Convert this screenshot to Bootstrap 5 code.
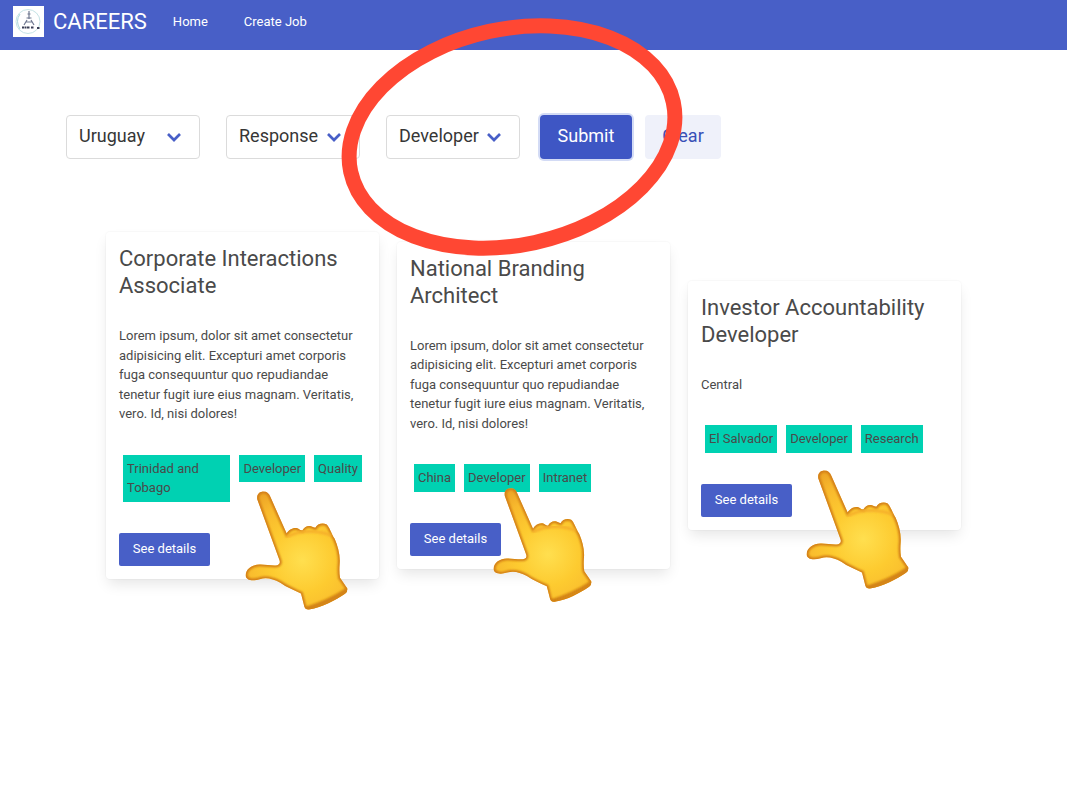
<!DOCTYPE html>
<html lang="en">
<head>
<meta charset="utf-8">
<meta name="viewport" content="width=device-width, initial-scale=1">
<title>Careers</title>
<link href="https://cdn.jsdelivr.net/npm/bootstrap@5.3.0/dist/css/bootstrap.min.css" rel="stylesheet">
<style>
  body { font-family: Roboto, "Liberation Sans", sans-serif; font-size: 13px; line-height: 1.5; color: #4a4a4a; background: #fff; padding-right: 11px; }
  .topbar { background: #485fc7; padding: 6px 13px 13px; }
  .topbar .navbar-brand { font-size: 22px; line-height: 28px; color: #fff; gap: 9px; margin-right: 26px; }
  .topbar .navbar-nav .nav-link { color: #fff; line-height: 30px; padding: 0; }
  .topbar .navbar-nav { gap: 36px; }

  .filters { padding: 65px 65px 0 66px; }
  .filters .form-select {
    width: 134px; height: 44px; padding: 0 30px 4px 12px; font-size: 18px; color: #363636; border-color: #dbdbdb; border-radius: 4px;
    background: #fff url("data:image/svg+xml,%3Csvg xmlns='http://www.w3.org/2000/svg' viewBox='0 0 16 11'%3E%3Cpath d='M2 2l6 6L14 2' fill='none' stroke='%23485fc7' stroke-width='2.700'/%3E%3C/svg%3E") no-repeat right 17px top 16px / 16px 11px;
  }
  .filter-fields { gap: 26px; margin-right: 20px; }
  .filters .btn { height: 44px; font-size: 18px; line-height: 27px; padding: 0 0 3px; border: 0; border-radius: 4px; }
  .btn-submit, .btn-submit:hover { width: 92px; margin-right: 13px; color: #fff; background: #3e56c4; box-shadow: 0 0 0 2px #d3dbf5; }
  .btn-clear, .btn-clear:hover { width: 76px; color: #3850b7; background: #eff1fa; }
  .highlight-ring { left: 342px; top: 17px; width: 340px; height: 240px; z-index: 3; pointer-events: none; overflow: visible; }

  .jobs { display: grid; grid-template-columns: repeat(3, minmax(0, 1fr)); gap: 18px; align-items: center; padding: 73px 106px; }
  .job { border: 0; border-radius: 4px; color: #4a4a4a; padding: 13px; box-shadow: 0 7px 14px -2px rgba(10,10,10,.1), 0 0 0 1px rgba(10,10,10,.02); }
  .job h2 { font-size: 22px; line-height: 27px; font-weight: 400; margin: 0 0 27px; }
  .tags { gap: 9px; padding: 0 4px; margin: 31px 0; }
  .tag-item { background: #00d1b2; padding: 4px; }
  .btn-details, .btn-details:hover { width: 91px; height: 33px; padding: 0 0 1px; font-size: 13px; line-height: 32px; border: 0; border-radius: 2px; color: #fff; background: #485fc7; }
  .hand { z-index: 2; width: 104px; height: 121px; pointer-events: none; }
  .hand-a { right: 31px; bottom: -32px; }
  .hand-b { right: 78px; bottom: -34px; width: 100px; height: 116px; }
  .hand-c { right: 52px; bottom: -60px; }
</style>
</head>
<body>
<svg width="0" height="0" class="position-absolute" aria-hidden="true">
  <defs>
    <radialGradient id="skin" gradientUnits="userSpaceOnUse" cx="205" cy="240" r="230">
      <stop offset="0" stop-color="#ffdf4f"/><stop offset=".42" stop-color="#fdcb30"/><stop offset=".78" stop-color="#f8b92d"/><stop offset="1" stop-color="#eda526"/>
    </radialGradient>
    <filter id="soft" x="-10%" y="-10%" width="120%" height="120%"><feGaussianBlur stdDeviation="3"/></filter>
    <path id="handShape" d="M70 58C67 42 77 34 89 34C99 34 105 40 109 50L158 160C165 148 179 140 192 145Q199 151 205 151C210 140 221 135 231 138Q239 142 244 143C249 131 265 127 277 132C286 139 291 158 302 176C312 199 319 225 317 250Q315 276 318 293L340 325Q341 336 333 341C303 361 266 382 225 388Q214 389 211 379L201 340C180 330 158 322 139 308C117 296 98 291 77 297C55 304 35 300 35 285C36 265 55 254 76 253C93 252 117 258 130 255Q141 252 136 239Z"/>
    <clipPath id="handClip"><use href="#handShape"/></clipPath>
    <symbol id="hand" viewBox="30 30 312 362">
      <use href="#handShape" fill="url(#skin)"/>
      <g clip-path="url(#handClip)" fill="none">
        <use href="#handShape" stroke="#d07a14" stroke-width="11" filter="url(#soft)"/>
        <path d="M158 170Q195 151 235 154T291 166" stroke="#f5ad2b" stroke-width="8" filter="url(#soft)"/>
        <path d="M211 388Q285 365 341 328" stroke="#d28212" stroke-width="12" filter="url(#soft)"/>
      </g>
    </symbol>
  </defs>
</svg>

<nav class="navbar navbar-expand topbar" aria-label="Main">
  <a class="navbar-brand d-flex align-items-center p-0" href="#">
    <svg width="31" height="31" viewBox="0 0 31 31" aria-hidden="true">
      <path fill="#fff" d="M0 0h31v31H0z"/>
      <circle cx="15" cy="15.500" r="12" fill="none" stroke="#c5e3e5" stroke-width="1"/>
      <path d="M7 8Q2 15 7 23" fill="none" stroke="#a9d4da"/>
      <path d="M16 5v5M14.500 8h3M13.500 12h5M16 10v3M14 14l-3 5M18 14l3 5M13 16h6" stroke="#6f7890" stroke-width="1.200" fill="none"/>
      <path d="M9 21.500h8M18 21.500h3M24 22h3" stroke="#3a3e55" stroke-width="2" stroke-dasharray="2 .5"/>
    </svg>
    <span>CAREERS</span>
  </a>
  <div class="navbar-nav">
    <a class="nav-link" href="#">Home</a>
    <a class="nav-link" href="#">Create Job</a>
  </div>
</nav>

<main>
  <form class="filters d-flex" onsubmit="return false">
    <div class="filter-fields d-flex">
      <select class="form-select" aria-label="Country"><option>Uruguay</option></select>
      <select class="form-select" aria-label="Area"><option>Response</option></select>
      <select class="form-select" aria-label="Role"><option>Developer</option></select>
    </div>
    <button class="btn btn-submit" type="submit">Submit</button>
    <button class="btn btn-clear" type="reset">Clear</button>
  </form>
  <svg class="highlight-ring position-absolute" viewBox="342 16 340 240" aria-hidden="true">
    <ellipse cx="512" cy="136" rx="165" ry="108" transform="rotate(-12.2 512 136)" fill="none" stroke="#ff4733" stroke-width="15"/>
  </svg>

  <section class="jobs" aria-label="Jobs">
    <article class="card job">
      <h2>Corporate Interactions Associate</h2>
      <p class="mb-0">Lorem ipsum, dolor sit amet consectetur adipisicing elit. Excepturi amet corporis fuga consequuntur quo repudiandae tenetur fugit iure eius magnam. Veritatis, vero. Id, nisi dolores!</p>
      <div class="tags d-flex align-items-start">
        <span class="tag-item">Trinidad and Tobago</span><span class="tag-item">Developer</span><span class="tag-item">Quality</span>
      </div>
      <button class="btn btn-details" type="button">See details</button>
      <svg class="hand hand-a position-absolute" aria-hidden="true"><use href="#hand"/></svg>
    </article>
    <article class="card job">
      <h2>National Branding Architect</h2>
      <p class="mb-0">Lorem ipsum, dolor sit amet consectetur adipisicing elit. Excepturi amet corporis fuga consequuntur quo repudiandae tenetur fugit iure eius magnam. Veritatis, vero. Id, nisi dolores!</p>
      <div class="tags d-flex align-items-start">
        <span class="tag-item">China</span><span class="tag-item">Developer</span><span class="tag-item">Intranet</span>
      </div>
      <button class="btn btn-details" type="button">See details</button>
      <svg class="hand hand-b position-absolute" aria-hidden="true"><use href="#hand"/></svg>
    </article>
    <article class="card job">
      <h2>Investor Accountability Developer</h2>
      <p class="mb-0">Central</p>
      <div class="tags d-flex align-items-start">
        <span class="tag-item">El Salvador</span><span class="tag-item">Developer</span><span class="tag-item">Research</span>
      </div>
      <button class="btn btn-details" type="button">See details</button>
      <svg class="hand hand-c position-absolute" aria-hidden="true"><use href="#hand"/></svg>
    </article>
  </section>
</main>
<script src="https://cdn.jsdelivr.net/npm/bootstrap@5.3.0/dist/js/bootstrap.bundle.min.js"></script>
</body>
</html>
